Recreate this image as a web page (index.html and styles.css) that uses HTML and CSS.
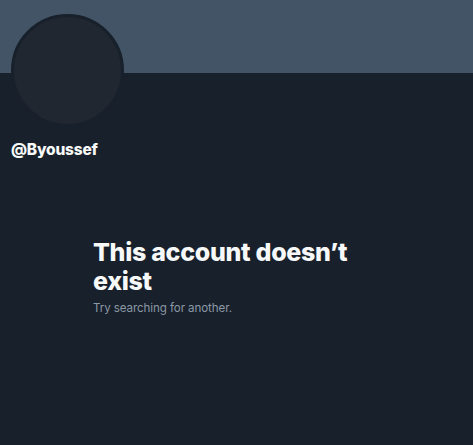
FILE: index.html
```html
<!DOCTYPE html>
<html>
<head>
<meta charset="utf-8">
<link rel="stylesheet" href="styles.css">
</head>
<body>
<div class="page">
  <div class="banner"></div>
  <div class="profile">
    <div class="avatar"></div>
    <div class="handle">@Byoussef</div>
  </div>
  <div class="empty">
    <h1 class="title">This account doesn’t exist</h1>
    <p class="sub">Try searching for another.</p>
  </div>
</div>
</body>
</html>
```
FILE: styles.css
```css
html, body {
  margin: 0;
  padding: 0;
  background: #17202b;
}
.page {
  width: 473px;
  height: 445px;
  background: #17202b;
  font-family: Inter, "Noto Sans", sans-serif;
  overflow: hidden;
}
.banner {
  height: 73px;
  background: #425465;
}
.profile {
  padding: 0 11px;
}
.avatar {
  width: 107px;
  height: 107px;
  border: 3px solid #17202b;
  border-radius: 50%;
  background: #202731;
  margin-top: -59px;
  box-sizing: content-box;
}
.handle {
  margin-top: 13px;
  color: #f7f9f9;
  font-weight: 800;
  font-size: 15.5px;
  line-height: 20px;
  letter-spacing: -0.2px;
}
.empty {
  padding: 78px 0 0 93px;
  width: 290px;
}
.title {
  margin: 0;
  color: #f7f9f9;
  font-size: 25px;
  line-height: 29px;
  font-weight: 800;
  letter-spacing: -0.3px;
}
.sub {
  margin: 4px 0 0;
  color: #8b98a5;
  font-size: 11.6px;
  line-height: 16px;
  letter-spacing: -0.1px;
}
```
